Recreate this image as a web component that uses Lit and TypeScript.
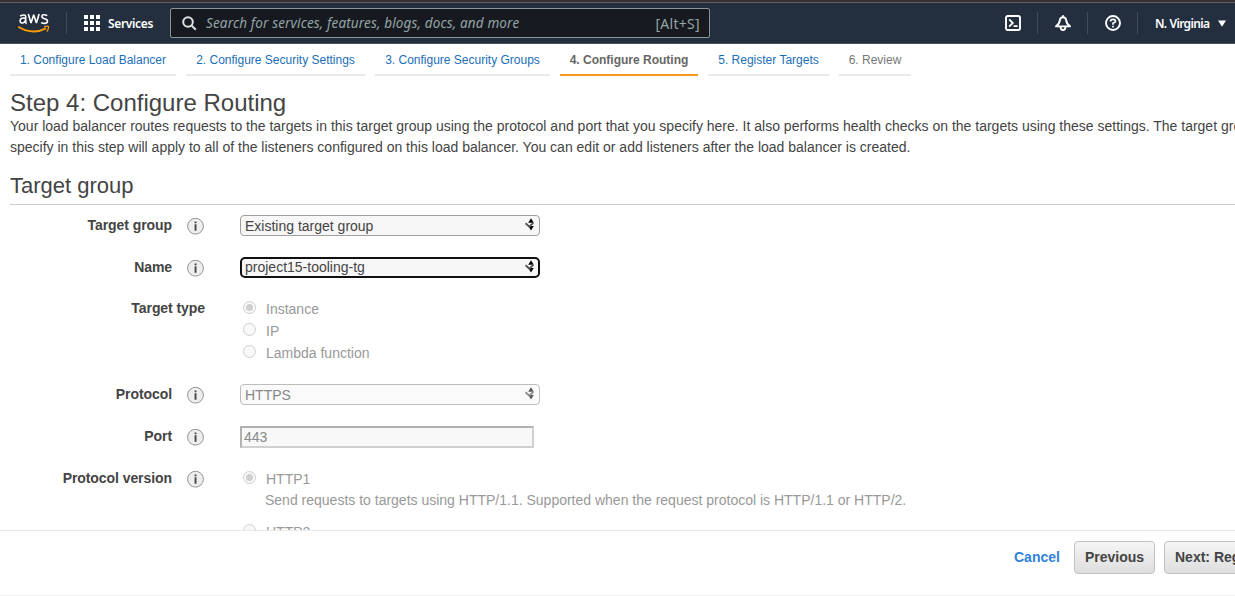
import { LitElement, html, css, svg, nothing } from "lit";
import { customElement, property } from "lit/decorators.js";
import { classMap } from "lit/directives/class-map.js";

@customElement("select-box")
class SelectBox extends LitElement {
  @property() value = "";
  @property({ type: Boolean }) focused = false;
  @property({ type: Boolean }) disabled = false;

  static styles = css`
    :host { display: block; }
    .box {
      box-sizing: border-box; width: 300px; height: 21px; border: 1px solid #a0a0a0;
      border-radius: 4px; background: #f7f7f7; color: #444; padding: 0 4px;
      display: flex; align-items: flex-start; justify-content: space-between;
      font-size: 14px; line-height: 21px;
    }
    .focused { border: 2px solid #101010; border-radius: 5px; padding: 0 3px; line-height: 17px; }
    .disabled { border-color: #bdbdbd; background: #fafafa; color: #888; }
    svg { display: block; margin-top: 2px; }
    .focused svg { margin-top: 1px; }
    .disabled svg { opacity: 0.65; }
  `;

  render() {
    return html`<div class=${classMap({ box: true, focused: this.focused, disabled: this.disabled })}>
      <span>${this.value}</span>
      <svg width="11" height="13" viewBox="0 0 11 13">
        <path d="M4.2 4.8L7 0.2L9.8 4.8ZM4.2 8L7 12.6L9.8 8Z" fill="#000" />
        <path d="M1.6 5.2L5.3 8.6L9.3 4.9" fill="none" stroke="#555" stroke-width="1.9" />
      </svg>
    </div>`;
  }
}

@customElement("radio-option")
class RadioOption extends LitElement {
  @property() label = "";
  @property({ type: Boolean }) checked = false;

  static styles = css`
    :host { display: flex; height: 22px; color: #999; font-size: 14px; line-height: 22px; }
    .dot {
      box-sizing: border-box; width: 13px; height: 13px; margin: 3px 10px 0 3px;
      border: 1px solid #cfcfcf; border-radius: 50%; background: #f8f8f8;
      display: flex; align-items: center; justify-content: center;
    }
    .fill { width: 7px; height: 7px; border-radius: 50%; background: #cfcfcf; }
  `;

  render() {
    return html`<span class="dot">${this.checked ? html`<span class="fill"></span>` : nothing}</span
      ><span>${this.label}</span>`;
  }
}

@customElement("form-row")
class FormRow extends LitElement {
  @property() label = "";
  @property({ type: Boolean }) info = false;

  static styles = css`
    :host { display: flex; color: #444; }
    .head { width: 205px; display: flex; justify-content: flex-end; flex: none; margin-right: 35px; }
    .label { font-weight: bold; font-size: 14px; line-height: 21px; letter-spacing: -0.07px; }
    .info { display: block; margin: 2px 0 0 14px; }
    .body { flex: none; }
  `;

  render() {
    return html`<div class="head">
        <span class="label">${this.label}</span>
        ${this.info
          ? html`<svg class="info" width="19" height="18" viewBox="0 0 19 18">
              <circle cx="9.5" cy="9.2" r="7.9" fill="#eee" stroke="#929292" />
              <path d="M8.6 7.3H10.5V13.7H8.6ZM8.6 4.5H10.5V6.2H8.6Z" fill="#444" />
            </svg>`
          : nothing}
      </div>
      <div class="body"><slot></slot></div>`;
  }
}

const steps = [
  { text: "1. Configure Load Balancer", width: 166, kind: "link" },
  { text: "2. Configure Security Settings", width: 179, kind: "link" },
  { text: "3. Configure Security Groups", width: 175, kind: "link" },
  { text: "4. Configure Routing", width: 138, kind: "current" },
  { text: "5. Register Targets", width: 121, kind: "link" },
  { text: "6. Review", width: 72, kind: "later" },
];

@customElement("app-root")
class AppRoot extends LitElement {
  static styles = css`
    :host {
      display: flex; flex-direction: column; box-sizing: border-box; width: 100%; height: 596px;
      overflow: hidden; background: #fff; color: #444;
      font-family: "Liberation Sans", Arial, sans-serif; font-size: 14px;
    }
    .nav {
      box-sizing: border-box; height: 44px; flex: none; background: #232f3e;
      border-bottom: 1px solid #49525e; display: flex; align-items: center;
      padding-top: 3px; color: #fff; font-family: "Noto Sans", sans-serif; position: relative;
    }
    .chrome { position: absolute; left: 0; right: 0; top: 0; height: 2px; background: #353331; border-bottom: 1px solid #625f5d; }
    .aws { margin: 0 16px 0 17px; display: block; }
    .sep { width: 1px; height: 22px; background: #414c58; flex: none; }
    .grid { margin: 0 8px 0 17px; display: block; }
    .services { font-weight: 600; font-size: 12px; width: 62px; letter-spacing: -0.35px; }
    .search {
      box-sizing: border-box; width: 540px; height: 30px; border: 1px solid #879596; border-radius: 2px;
      background: #16191f; color: #95a5a6; display: flex; align-items: center; padding: 0 9px 0 11px;
      font-size: 13.5px; white-space: nowrap;
    }
    .search em { margin-left: 9px; flex: 1; letter-spacing: 0.15px; }
    .keys { font-size: 14px; letter-spacing: 0.3px; }
    .tools { margin-left: auto; display: flex; align-items: center; }
    .tools svg { display: block; }
    .tool { width: 49px; display: flex; justify-content: center; }
    .region { font-weight: 600; font-size: 12px; margin-left: 17px; width: 63px; white-space: nowrap; letter-spacing: -0.65px; word-spacing: 0.5px; }
    .caret { margin-right: 9px; }
    .steps { display: flex; gap: 10px; padding-left: 10px; height: 32px; flex: none; }
    .step {
      box-sizing: border-box; border-bottom: 2px solid #eaeaea; text-align: center; white-space: nowrap;
      font-size: 12px; line-height: 32px; color: #1b6fb8; height: 32px;
    }
    .current { border-color: #f7981d; color: #666; font-weight: bold; }
    .later { color: #777; }
    .content { height: 454px; flex: none; overflow: hidden; padding-left: 10px; }
    h1, h2 { margin: 0; font-weight: normal; color: #444; }
    h1 { font-size: 24px; line-height: 28px; padding-top: 13px; }
    p { margin: -1px 0 0; line-height: 21px; white-space: nowrap; }
    h2 { font-size: 22px; line-height: 28px; margin-top: 14px; height: 32px; border-bottom: 1px solid #ccc; }
    form-row { margin-left: -10px; }
    .rows { display: grid; grid-template-rows: 42px 41px 86px 42px 42px 90px; padding-top: 10px; }
    .port {
      box-sizing: border-box; width: 294px; height: 22px; border: 2px solid; border-color: #b2b2b2 #d0d0d0 #d0d0d0 #b2b2b2;
      background: #f8f8f8; color: #888; line-height: 19px; padding-left: 2px;
    }
    .note { color: #999; margin-left: 25px; line-height: 20px; height: 31px; }
    .footer {
      box-sizing: border-box; height: 66px; flex: none; border-top: 1px solid #e9e9e9; border-bottom: 1px solid #f0f0f0;
      display: flex; align-items: flex-start; padding: 10px 0 0 1014px; white-space: nowrap; font-weight: bold;
    }
    .cancel { color: #2f82dc; width: 60px; line-height: 33px; flex: none; }
    .button {
      box-sizing: border-box; height: 33px; line-height: 31px; border: 1px solid #c2c2c2; border-radius: 4px;
      background: linear-gradient(#f5f5f5, #dedede); padding: 0 10px; margin-right: 9px; flex: none;
    }
    .previous { width: 81px; }
  `;

  render() {
    return html`
      <div class="nav">
        <div class="chrome"></div>
        <svg class="aws" width="33" height="22" viewBox="0 0 33 22">
          <g fill="none" stroke="#fff" stroke-width="1.6">
            <path d="M3.1 4.1Q8.7 1.5 8.7 5V9.5Q8.7 11.4 9.7 11.6M8.5 6.4C4.5 5.4 3.1 6.8 3.1 8.8C3.1 12.2 8.1 11.3 8.5 8.2" />
            <path d="M11.3 2.1L14 11L16.7 2.7L19.4 11L22.1 2.1" stroke-linejoin="bevel" />
            <path d="M30.3 3.4Q24.9 1.6 24.9 4.4C24.9 7.5 30.5 5.8 30.5 9C30.5 12.1 26.4 11.7 24.1 10.6" />
          </g>
          <g fill="none" stroke="#f90">
            <path d="M1.2 14.8Q15.5 23.4 29 16.4" stroke-width="1.9" />
            <path d="M27 14.8Q32.8 13.4 31.5 15.3Q31.5 17.3 29.8 19.6" stroke-width="1.2" />
          </g>
        </svg>
        <span class="sep"></span>
        <svg class="grid" width="16" height="16" viewBox="0 0 16 16" fill="#fff">
          ${[0, 6, 12].map((y) => [0, 6, 12].map((x) => svg`<rect x=${x} y=${y} width="4" height="4" />`))}
        </svg>
        <span class="services">Services</span>
        <div class="search">
          <svg width="15" height="15" viewBox="0 0 15 15" fill="none" stroke="#e0e3e3" stroke-width="2">
            <circle cx="6" cy="6" r="4.8" /><path d="M9.4 9.4L13.8 13.8" />
          </svg>
          <em>Search for services, features, blogs, docs, and more</em><span class="keys">[Alt+S]</span>
        </div>
        <div class="tools">
          <span class="tool"><svg width="16" height="16" viewBox="0 0 16 16" fill="none" stroke="#fff" stroke-width="1.9">
            <rect x="1" y="1" width="14" height="14" rx="1.8" /><path d="M4.2 4.4L7.8 8L4.2 11.6M8.6 11.2H12.6" stroke-width="1.8" />
          </svg></span>
          <span class="sep"></span>
          <span class="tool"><svg width="16" height="16" viewBox="0 0 16 16" fill="none" stroke="#fff" stroke-width="1.9" stroke-linejoin="round">
            <path d="M1 11.4C3.6 9.6 4.5 8 4.8 5.4Q5.2 2.2 8 2.2T11.2 5.4C11.5 8 12.4 9.6 15 11.4Z" />
            <path d="M8 0.2V2.2M5.6 12Q5.6 15.1 8 15.1T10.4 12" />
          </svg></span>
          <span class="sep"></span>
          <span class="tool"><svg width="16" height="16" viewBox="0 0 16 16" fill="none" stroke="#fff" stroke-width="1.9">
            <circle cx="8" cy="8" r="7" /><path d="M5.5 6.5Q5.5 4.4 8 4.4T10.5 6.2Q10.5 7.3 8 8.2V9.8M8 10.8V12.5" stroke-width="1.7" />
          </svg></span>
          <span class="sep"></span>
          <span class="region">N. Virginia</span>
          <svg class="caret" width="8" height="7" viewBox="0 0 8 7"><path d="M0 .5H8L4 6.8Z" fill="#fff" /></svg>
        </div>
      </div>
      <div class="steps">
        ${steps.map((s) => html`<div class="step ${s.kind}" style="width:${s.width}px">${s.text}</div>`)}
      </div>
      <div class="content">
        <h1>Step 4: Configure Routing</h1>
        <p>
          Your load balancer routes requests to the targets in this target group using the protocol and port that you specify here. It also performs health checks on the targets using these settings. The target group you<br />
          specify in this step will apply to all of the listeners configured on this load balancer. You can edit or add listeners after the load balancer is created.
        </p>
        <h2>Target group</h2>
        <div class="rows">
          <form-row label="Target group" info><select-box value="Existing target group"></select-box></form-row>
          <form-row label="Name" info><select-box value="project15-tooling-tg" focused></select-box></form-row>
          <form-row label="Target type">
            <radio-option label="Instance" checked></radio-option>
            <radio-option label="IP"></radio-option>
            <radio-option label="Lambda function"></radio-option>
          </form-row>
          <form-row label="Protocol" info><select-box value="HTTPS" disabled></select-box></form-row>
          <form-row label="Port" info><div class="port">443</div></form-row>
          <form-row label="Protocol version" info>
            <radio-option label="HTTP1" checked></radio-option>
            <div class="note">Send requests to targets using HTTP/1.1. Supported when the request protocol is HTTP/1.1 or HTTP/2.</div>
            <radio-option label="HTTP2"></radio-option>
          </form-row>
        </div>
      </div>
      <div class="footer">
        <span class="cancel">Cancel</span>
        <span class="button previous">Previous</span>
        <span class="button">Next: Register Targets</span>
      </div>
    `;
  }
}
